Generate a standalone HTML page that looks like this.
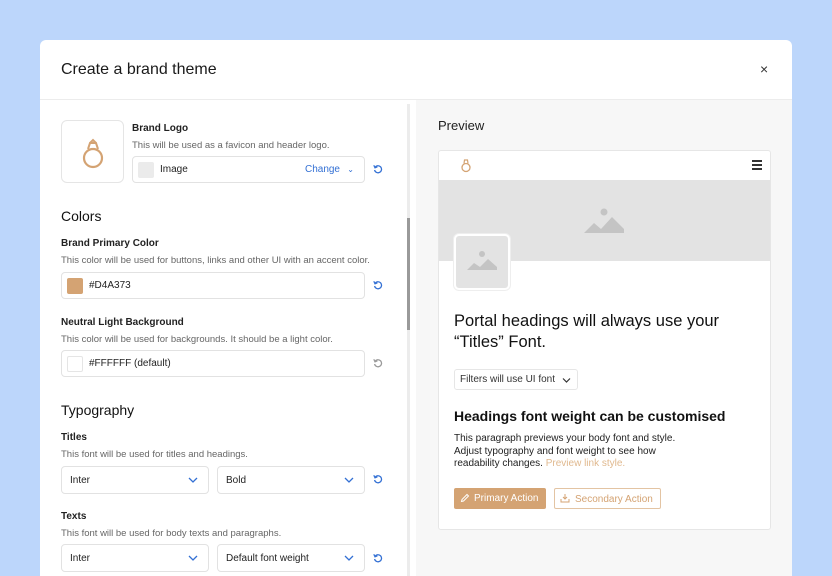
<!DOCTYPE html>
<html style="width:832px;height:576px;overflow:hidden"><head><meta charset="utf-8"><style>
*{box-sizing:border-box;margin:0;padding:0}
body{width:832px;height:576px;overflow:hidden;background:#bcd6fb;font-family:"Liberation Sans",sans-serif;color:#1a1a1a;position:relative}
.a{position:absolute}
.modal{left:40px;top:40px;width:752px;height:536px;background:#fff;border-radius:6px 6px 0 0;overflow:hidden}
.lbl{font-size:10px;font-weight:bold;color:#222}
.desc{font-size:9.5px;color:#666}
.inp{border:1px solid #e2e2e2;border-radius:4px;background:#fff;height:28px;font-size:10px;display:flex;align-items:center;padding-left:8px;color:#222}
.h2{font-size:14px;color:#111}
.chev{position:absolute;right:10px;top:9px}
</style></head><body>
<div class="a modal">
  <div class="a" style="left:21px;top:21px;font-size:16px;color:#1a1a1a">Create a brand theme</div>
  <div class="a" style="left:720px;top:21px;font-size:14px;color:#333">×</div>
  <div class="a" style="left:0;top:59px;width:752px;height:1px;background:#ececec"></div>
  <div class="a" style="left:376px;top:60px;width:376px;height:500px;background:#f7f7f7"></div>
  <div class="a" style="left:367px;top:64px;width:3px;height:480px;background:#ececec"></div>
  <div class="a" style="left:367px;top:178px;width:3px;height:112px;background:#9a9a9a"></div>
  <div class="a" style="left:21px;top:80px;width:63px;height:63px;border:1px solid #e5e5e5;border-radius:6px">
    <svg class="a" style="left:18px;top:15px" width="26" height="34" viewBox="0 0 26 34"><circle cx="13" cy="22" r="9" fill="none" stroke="#d4a373" stroke-width="2.2"/><path d="M8 13 L10 7 H16 L18 13 M10 7 L13 4 L16 7" fill="none" stroke="#d4a373" stroke-width="2"/></svg>
  </div>
  <div class="a lbl" style="left:92px;top:83px">Brand Logo</div>
  <div class="a desc" style="left:92px;top:100px">This will be used as a favicon and header logo.</div>
  <div class="a inp" style="left:92px;top:116px;width:233px;height:27px;padding-left:5px"><span style="width:16px;height:16px;background:#ebebeb;border-radius:2px;margin-right:6px"></span>Image<span style="position:absolute;right:24px;color:#3370d4">Change</span><span style="position:absolute;right:10px;color:#3370d4;font-size:8px">⌄</span></div>
  <div class="a h2" style="left:21px;top:168px">Colors</div>
  <div class="a lbl" style="left:21px;top:198px">Brand Primary Color</div>
  <div class="a desc" style="left:21px;top:215px">This color will be used for buttons, links and other UI with an accent color.</div>
  <div class="a inp" style="left:21px;top:232px;width:304px;height:27px;padding-left:5px"><span style="width:16px;height:16px;background:#d4a373;border-radius:2px;margin-right:6px"></span>#D4A373</div>
  <div class="a lbl" style="left:21px;top:277px">Neutral Light Background</div>
  <div class="a desc" style="left:21px;top:294px">This color will be used for backgrounds. It should be a light color.</div>
  <div class="a inp" style="left:21px;top:310px;width:304px;height:27px;padding-left:5px"><span style="width:16px;height:16px;border:1px solid #e5e5e5;border-radius:2px;margin-right:6px"></span>#FFFFFF (default)</div>
  <div class="a h2" style="left:21px;top:362px">Typography</div>
  <div class="a lbl" style="left:21px;top:392px">Titles</div>
  <div class="a desc" style="left:21px;top:409px">This font will be used for titles and headings.</div>
  <div class="a inp" style="left:21px;top:426px;width:148px;padding-left:8px">Inter<svg class="chev" width="10" height="8"><path d="M1 2l4 4 4-4" stroke="#3370d4" fill="none" stroke-width="1.3"/></svg></div>
  <div class="a inp" style="left:177px;top:426px;width:148px">Bold<svg class="chev" width="10" height="8"><path d="M1 2l4 4 4-4" stroke="#3370d4" fill="none" stroke-width="1.3"/></svg></div>
  <div class="a lbl" style="left:21px;top:471px">Texts</div>
  <div class="a desc" style="left:21px;top:488px">This font will be used for body texts and paragraphs.</div>
  <div class="a inp" style="left:21px;top:504px;width:148px">Inter<svg class="chev" width="10" height="8"><path d="M1 2l4 4 4-4" stroke="#3370d4" fill="none" stroke-width="1.3"/></svg></div>
  <div class="a inp" style="left:177px;top:504px;width:148px">Default font weight<svg class="chev" width="10" height="8"><path d="M1 2l4 4 4-4" stroke="#3370d4" fill="none" stroke-width="1.3"/></svg></div>
  <svg class="a" style="left:333px;top:124px" width="10" height="10" viewBox="0 0 10 10"><path d="M2 3.5A3.5 3.5 0 1 1 1.6 6" fill="none" stroke="#3370d4" stroke-width="1.3"/><path d="M0.8 1.2 L2 3.8 L4.4 2.8" fill="none" stroke="#3370d4" stroke-width="1.2"/></svg>
  <svg class="a" style="left:333px;top:240px" width="10" height="10" viewBox="0 0 10 10"><path d="M2 3.5A3.5 3.5 0 1 1 1.6 6" fill="none" stroke="#3370d4" stroke-width="1.3"/><path d="M0.8 1.2 L2 3.8 L4.4 2.8" fill="none" stroke="#3370d4" stroke-width="1.2"/></svg>
  <svg class="a" style="left:333px;top:318px" width="10" height="10" viewBox="0 0 10 10"><path d="M2 3.5A3.5 3.5 0 1 1 1.6 6" fill="none" stroke="#999" stroke-width="1.3"/><path d="M0.8 1.2 L2 3.8 L4.4 2.8" fill="none" stroke="#999" stroke-width="1.2"/></svg>
  <svg class="a" style="left:333px;top:434px" width="10" height="10" viewBox="0 0 10 10"><path d="M2 3.5A3.5 3.5 0 1 1 1.6 6" fill="none" stroke="#3370d4" stroke-width="1.3"/><path d="M0.8 1.2 L2 3.8 L4.4 2.8" fill="none" stroke="#3370d4" stroke-width="1.2"/></svg>
  <svg class="a" style="left:333px;top:513px" width="10" height="10" viewBox="0 0 10 10"><path d="M2 3.5A3.5 3.5 0 1 1 1.6 6" fill="none" stroke="#3370d4" stroke-width="1.3"/><path d="M0.8 1.2 L2 3.8 L4.4 2.8" fill="none" stroke="#3370d4" stroke-width="1.2"/></svg>
  <div class="a" style="left:398px;top:78px;font-size:13px;color:#222">Preview</div>
  <div class="a" style="left:398px;top:110px;width:333px;height:380px;background:#fff;border:1px solid #e6e6e6;border-radius:3px;overflow:hidden">
    <svg class="a" style="left:21px;top:6px" width="12" height="16" viewBox="0 0 12 16"><circle cx="6" cy="10.5" r="4" fill="none" stroke="#d4a373" stroke-width="1.3"/><path d="M4 6.5 L4.5 3 H7.5 L8 6.5" fill="none" stroke="#d4a373" stroke-width="1.2"/></svg>
    <div class="a" style="left:313px;top:9px;width:10px;height:2px;background:#333;box-shadow:0 4px 0 #333,0 8px 0 #333"></div>
    <div class="a" style="left:0;top:29px;width:333px;height:81px;background:#e3e3e3"></div>
    <svg class="a" style="left:144px;top:56px" width="42" height="28" viewBox="0 0 42 28"><circle cx="21" cy="5" r="3.5" fill="#c4c4c4"/><path d="M1 26 L11 16 L18 22 L29 10 L41 22 V26 Z" fill="#c4c4c4"/></svg>
    <div class="a" style="left:15px;top:83px;width:56px;height:56px;background:#e3e3e3;border:2px solid #fff;border-radius:5px;box-shadow:0 0 0 1px #eee"></div>
    <svg class="a" style="left:27px;top:99px" width="32" height="22" viewBox="0 0 32 22"><circle cx="16" cy="4" r="3" fill="#c4c4c4"/><path d="M1 20 L8 13 L14 17 L22 9 L31 17 V20 Z" fill="#c4c4c4"/></svg>
    <div class="a" style="left:15px;top:160px;width:300px;font-size:16.5px;line-height:21px;color:#111">Portal headings will always use your “Titles” Font.</div>
    <div class="a" style="left:15px;top:218px;width:124px;height:21px;border:1px solid #e6e6e6;border-radius:3px;font-size:10px;color:#333;padding:4px 0 0 5px">Filters will use UI font<svg class="a" style="right:6px;top:7px" width="9" height="7"><path d="M1 1.5l3.5 3.5 3.5-3.5" stroke="#333" fill="none" stroke-width="1.2"/></svg></div>
    <div class="a" style="left:15px;top:257px;font-size:14px;font-weight:bold;color:#111">Headings font weight can be customised</div>
    <div class="a" style="left:15px;top:282px;font-size:10px;line-height:12.5px;color:#222;width:260px">This paragraph previews your body font and style.<br>Adjust typography and font weight to see how<br>readability changes. <span style="color:#e0b98f">Preview link style.</span></div>
    <div class="a" style="left:15px;top:337px;width:92px;height:21px;background:#d4a373;border-radius:2px;color:#fff;font-size:10px;padding:5px 0 0 20px">Primary Action</div>
    <svg class="a" style="left:21px;top:342px" width="10" height="10" viewBox="0 0 10 10"><path d="M1.5 8.5 L2 6.5 L7 1.5 L8.5 3 L3.5 8 Z" fill="none" stroke="#fff" stroke-width="1"/></svg>
    <div class="a" style="left:115px;top:337px;width:107px;height:21px;border:1px solid #e3c4a3;border-radius:2px;color:#d4a373;font-size:10px;padding:5px 0 0 20px">Secondary Action</div>
    <svg class="a" style="left:121px;top:342px" width="10" height="10" viewBox="0 0 10 10"><path d="M5 1v5M3 4l2 2 2-2M1 6v3h8V6" fill="none" stroke="#d4a373" stroke-width="1"/></svg>
  </div>
</div>
</body></html>
